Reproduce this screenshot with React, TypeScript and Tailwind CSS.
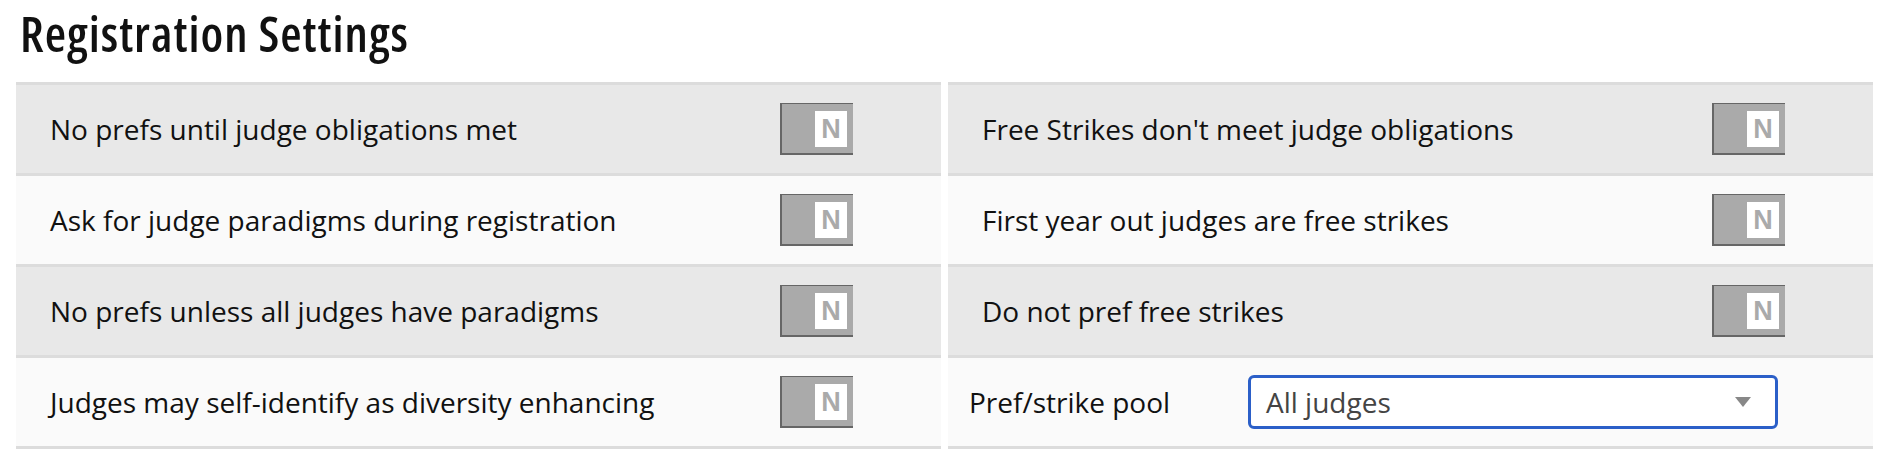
import React from "react";

function Toggle() {
  return (
    <div className="flex h-[52px] w-[73px] items-start justify-end border-b-2 border-l-2 border-t border-r-0 border-[#666] bg-[#aaaaaa] pr-[6px] pt-[7px]">
      <div
        className="flex h-[36px] w-[32px] items-center justify-center bg-white text-[27px] font-bold leading-none text-[#aaaaaa]"
        style={{ fontFamily: '"Liberation Sans", Arial, sans-serif' }}
      >
        N
      </div>
    </div>
  );
}

function ToggleRow({ label, shade }: { label: string; shade: boolean }) {
  return (
    <div
      className={`flex h-[91px] items-center justify-between border-b-[3px] border-[#dcdcdc] pl-[34px] pr-[88px] ${
        shade ? "bg-[#e8e8e8]" : "bg-[#fafafa]"
      }`}
    >
      <span className="text-[28px] text-[#111]">{label}</span>
      <Toggle />
    </div>
  );
}

export default function App() {
  const left = [
    "No prefs until judge obligations met",
    "Ask for judge paradigms during registration",
    "No prefs unless all judges have paradigms",
    "Judges may self-identify as diversity enhancing",
  ];
  const right = [
    "Free Strikes don't meet judge obligations",
    "First year out judges are free strikes",
    "Do not pref free strikes",
  ];
  return (
    <div
      className="min-h-[456px] w-[1892px] bg-white pl-[16px] pr-[19px]"
      style={{ fontFamily: '"Open Sans", "Noto Sans", sans-serif' }}
    >
      <h2 className="pl-[4px] pt-[3px] text-[49px] font-semibold leading-[60px] tracking-[1px] text-[#111] font-stretch-[84%]">
        Registration Settings
      </h2>
      <div className="mt-[19px] flex gap-[7px]">
        <div className="w-[925px] border-t-[3px] border-[#dcdcdc]">
          {left.map((l, i) => (
            <ToggleRow key={l} label={l} shade={i % 2 === 0} />
          ))}
        </div>
        <div className="w-[925px] border-t-[3px] border-[#dcdcdc]">
          {right.map((l, i) => (
            <ToggleRow key={l} label={l} shade={i % 2 === 0} />
          ))}
          <div className="flex h-[91px] items-center border-b-[3px] border-[#dcdcdc] bg-[#fafafa] pl-[21px]">
            <span className="w-[279px] text-[28px] text-[#111]">Pref/strike pool</span>
            <div className="flex h-[54px] w-[530px] items-center justify-between rounded-[6px] border-[3px] border-[#2b5fc8] bg-white pl-[15px] pr-[24px]">
              <span className="text-[28px] text-[#444]">All judges</span>
              <svg width="16" height="10" viewBox="0 0 16 10">
                <polygon points="0,0 16,0 8,10" fill="#888" />
              </svg>
            </div>
          </div>
        </div>
      </div>
    </div>
  );
}
